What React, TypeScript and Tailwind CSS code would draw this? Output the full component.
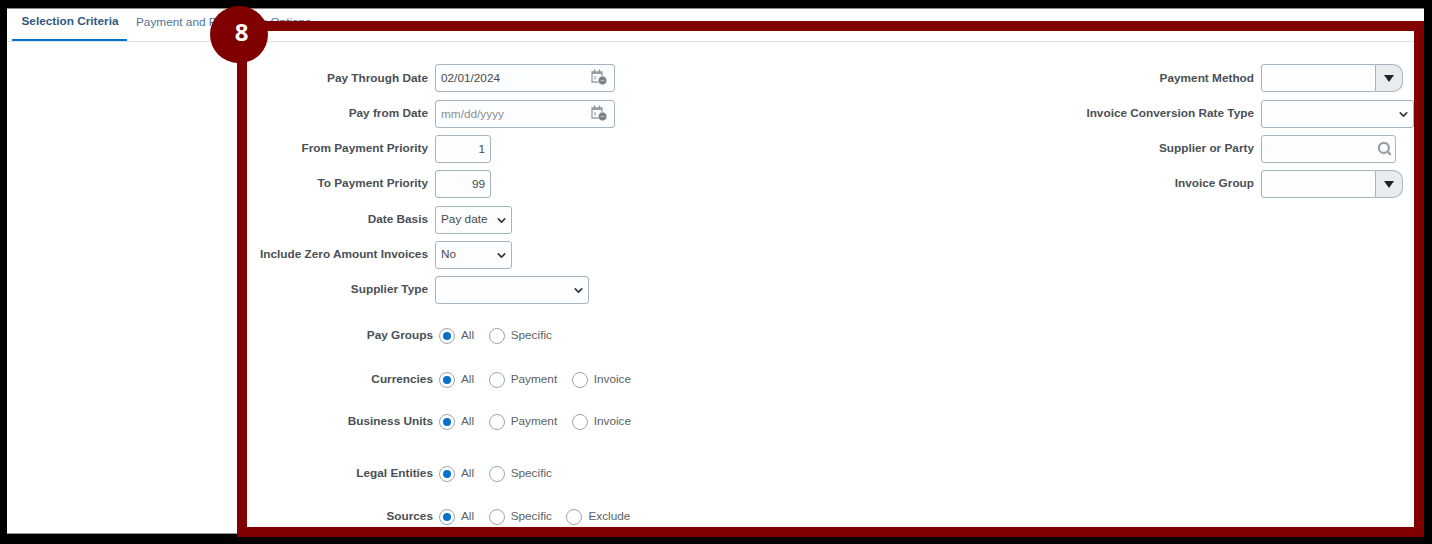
import { ChevronDown, Search } from 'lucide-react'

const inputBox = 'h-full w-full rounded-[3px] border border-[#a5b4c2] bg-[#fbfdfe] px-[5px] text-[11.8px] text-[#4a4a4a] outline-none'

function CalendarIcon() {
  return (
    <svg width="18" height="18" viewBox="0 0 18 18" fill="none" className="absolute right-[7px] top-[4px]">
      <path d="M2 4h10v10H2z" stroke="#9a9ea2" strokeWidth="1.3" />
      <path d="M2 4h10v2H2z" fill="#9a9ea2" />
      <path d="M4.5 1.5v3M9.5 1.5v3" stroke="#8a8f94" strokeWidth="1.4" />
      <path d="M5 8v3.5" stroke="#8a8f94" strokeWidth="1" />
      <circle cx="12.5" cy="12.5" r="4.4" fill="#7d8286" stroke="#fff" strokeWidth="0.6" />
      <path d="M10.5 12.5h4" stroke="#b5b9bc" strokeWidth="1" />
    </svg>
  )
}

function Label({ children }: { children: string }) {
  return <label className="whitespace-nowrap text-right text-[11.8px] font-bold text-[#4a4f54]">{children}</label>
}

function DateField({ value, placeholder }: { value?: string; placeholder?: string }) {
  return (
    <div className="relative h-[28px] w-[180px]">
      <input readOnly value={value ?? ''} placeholder={placeholder} className={`${inputBox} placeholder:text-[#8a8f94]`} />
      <CalendarIcon />
    </div>
  )
}

function NumberField({ value }: { value: string }) {
  return (
    <div className="h-[28px] w-[56px]">
      <input readOnly value={value} className={`${inputBox} pr-[5px] text-right`} />
    </div>
  )
}

function SelectField({ value, width }: { value?: string; width: string }) {
  return (
    <div className={`relative h-[28px] ${width}`}>
      <select defaultValue={value} className={`${inputBox} appearance-none`}>
        <option>{value}</option>
      </select>
      <ChevronDown size={13} strokeWidth={3} className="absolute right-[4px] top-[8px] text-[#33383c]" />
    </div>
  )
}

function ComboField() {
  return (
    <div className="flex h-[28px] w-[142px]">
      <input readOnly className="h-full w-[115px] rounded-l-[3px] border border-[#a5b4c2] bg-[#fbfdfe] outline-none" />
      <button className="flex h-full w-[27px] items-center justify-center rounded-r-[10px] border border-l-0 border-[#a5b4c2] bg-[#e8ecef]">
        <svg width="10" height="7" viewBox="0 0 10 7">
          <path d="M0 0h10L5 7z" fill="#1f2326" />
        </svg>
      </button>
    </div>
  )
}

function Radio({ label, checked }: { label: string; checked?: boolean }) {
  return (
    <div className="flex items-center gap-[6px]">
      <span className="mt-[2px] flex h-[16px] w-[16px] items-center justify-center rounded-full border border-[#9aa7b1] bg-white">
        {checked && <span className="h-[8px] w-[8px] rounded-full bg-[#0572ce]" />}
      </span>
      <span className="text-[11.8px] text-[#5a5f64]">{label}</span>
    </div>
  )
}

function RadioRow({ label, options, className }: { label: string; options: string[]; className: string }) {
  return (
    <div className={`flex h-[20px] items-center ${className}`}>
      <div className="mb-[2px] mr-[6px] w-[186px] text-right">
        <Label>{label}</Label>
      </div>
      <div className="flex gap-[14.5px]">
        <Radio label="All" checked />
        {options.map((o) => (
          <Radio key={o} label={o} />
        ))}
      </div>
    </div>
  )
}

export default function App() {
  return (
    <div className="relative h-[544px] w-[1432px] overflow-hidden bg-black font-['Liberation_Sans',sans-serif]">
      <div className="ml-[7px] h-[534px] w-[1417px] pt-[8px]">
        <div className="h-[526px] border-b border-t border-b-[#9a9a9a] border-t-[#8a8a8a] bg-white">
          {/* Tabs */}
          <div className="flex h-[33px] border-b border-[#dde3e8] pl-[5px] text-[11.8px]">
            <div className="flex h-[32px] w-[115px] items-center justify-center border-b-2 border-[#0572ce] pb-[5px] pl-[1px] font-bold text-[#31597f]">
              Selection Criteria
            </div>
            <div className="flex h-[32px] items-center pb-[5px] pl-[9px] text-[#4f7299]">Payment and Processing Options</div>
          </div>

          {/* Form */}
          <div className="flex justify-between pl-[240px] pr-[10px] pt-[22.4px]">
            <div>
              <div className="grid grid-cols-[181px_auto] items-center justify-start gap-x-[7px] gap-y-[7.3px]">
                <Label>Pay Through Date</Label>
                <DateField value="02/01/2024" />
                <Label>Pay from Date</Label>
                <DateField placeholder="mm/dd/yyyy" />
                <Label>From Payment Priority</Label>
                <NumberField value="1" />
                <Label>To Payment Priority</Label>
                <NumberField value="99" />
                <Label>Date Basis</Label>
                <SelectField value="Pay date" width="w-[77px]" />
                <Label>Include Zero Amount Invoices</Label>
                <SelectField value="No" width="w-[77px]" />
                <Label>Supplier Type</Label>
                <SelectField width="w-[154px]" />
              </div>
              <RadioRow label="Pay Groups" options={['Specific']} className="mt-[21.2px]" />
              <RadioRow label="Currencies" options={['Payment', 'Invoice']} className="mt-[24px]" />
              <RadioRow label="Business Units" options={['Payment', 'Invoice']} className="mt-[22px]" />
              <RadioRow label="Legal Entities" options={['Specific']} className="mt-[32px]" />
              <RadioRow label="Sources" options={['Specific', 'Exclude']} className="mt-[23px]" />
            </div>

            <div className="grid grid-cols-[auto_153px] content-start items-center gap-x-[7px] gap-y-[7.3px]">
              <Label>Payment Method</Label>
              <ComboField />
              <Label>Invoice Conversion Rate Type</Label>
              <SelectField width="w-[153px]" />
              <Label>Supplier or Party</Label>
              <div className="relative h-[28px] w-[135px]">
                <input readOnly className={inputBox} />
                <Search size={15} strokeWidth={3.5} className="absolute right-[4px] top-[6px] text-[#9a9ea2]" />
              </div>
              <Label>Invoice Group</Label>
              <ComboField />
            </div>
          </div>
        </div>
      </div>

      {/* Annotation frame and step badge */}
      <div className="absolute left-[237px] top-[21px] h-[516px] w-[1187px] border-[10px] border-[#800000]" />
      <div className="absolute left-[210px] top-[6px] flex h-[57px] w-[58px] items-center justify-center rounded-full bg-[#800000] pb-[6px] pl-[5px] font-['Open_Sans',sans-serif] text-2xl font-bold text-white">
        8
      </div>
    </div>
  )
}
